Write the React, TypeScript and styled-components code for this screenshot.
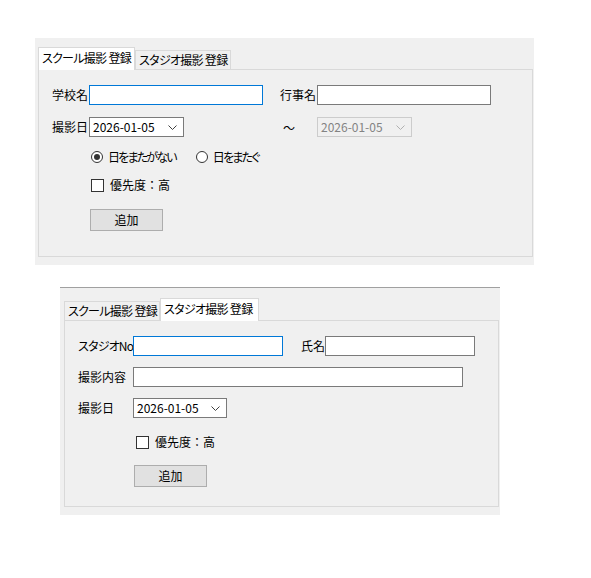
import React from "react";
import styled, { createGlobalStyle } from "styled-components";

const GlobalStyle = createGlobalStyle`
  html, body { margin: 0; padding: 0; background: #ffffff; }
  body {
    font-family: "Noto Sans CJK JP", "Noto Sans", sans-serif;
    font-size: 12px;
    color: #000000;
  }
`;

const Page = styled.div`
  display: flex;
  flex-direction: column;
  align-items: flex-start;
`;

const Window = styled.div<{ $mt: number; $ml: number; $w: number; $pt: number; $pl: number; $topLine?: boolean }>`
  margin-top: ${(p) => p.$mt}px;
  margin-left: ${(p) => p.$ml}px;
  width: ${(p) => p.$w}px;
  box-sizing: border-box;
  background: #f0f0f0;
  padding: ${(p) => p.$pt}px 1px 8px ${(p) => p.$pl}px;
  border-top: ${(p) => (p.$topLine ? "1px solid #a0a0a0" : "none")};
`;

const TabBar = styled.div`
  display: flex;
  align-items: flex-end;
  height: 22px;
`;

const Tab = styled.div<{ $active?: boolean; $w: number }>`
  box-sizing: border-box;
  width: ${(p) => p.$w}px;
  height: ${(p) => (p.$active ? 23 : 19)}px;
  margin-bottom: ${(p) => (p.$active ? -1 : 0)}px;
  position: relative;
  z-index: ${(p) => (p.$active ? 1 : 0)};
  background: ${(p) => (p.$active ? "#ffffff" : "#f0f0f0")};
  border: 1px solid #d9d9d9;
  border-bottom: none;
  display: flex;
  align-items: center;
  padding: ${(p) => (p.$active ? "0 0 2px 3px" : "0 0 0 3px")};
  white-space: nowrap;
  line-height: 1;
  font-feature-settings: "palt";
  letter-spacing: -0.7px;
  overflow: hidden;
`;

const Panel = styled.div<{ $h: number; $pl: number }>`
  box-sizing: border-box;
  height: ${(p) => p.$h}px;
  border: 1px solid #d9d9d9;
  padding: 15px 0 0 ${(p) => p.$pl}px;
  display: flex;
  flex-direction: column;
`;

const Row = styled.div<{ $mt?: number; $indent?: number }>`
  display: flex;
  align-items: center;
  margin-top: ${(p) => p.$mt ?? 0}px;
  margin-left: ${(p) => p.$indent ?? 0}px;
`;

const Label = styled.span<{ $w: number; $ml?: number; $kana?: boolean }>`
  width: ${(p) => p.$w}px;
  margin-left: ${(p) => p.$ml ?? 0}px;
  flex: none;
  white-space: nowrap;
  line-height: 20px;
  font-feature-settings: ${(p) => (p.$kana ? '"palt"' : "normal")};
  letter-spacing: ${(p) => (p.$kana ? "-0.8px" : "0")};
`;

const TextBox = styled.div<{ $w: number; $focused?: boolean }>`
  box-sizing: border-box;
  width: ${(p) => p.$w}px;
  height: 20px;
  background: #ffffff;
  border: 1px solid ${(p) => (p.$focused ? "#0078d7" : "#7a7a7a")};
  flex: none;
`;

const Select = styled.div<{ $w: number; $disabled?: boolean }>`
  box-sizing: border-box;
  width: ${(p) => p.$w}px;
  height: 20px;
  background: ${(p) => (p.$disabled ? "#f0f0f0" : "#ffffff")};
  border: 1px solid ${(p) => (p.$disabled ? "#cccccc" : "#7a7a7a")};
  color: ${(p) => (p.$disabled ? "#838383" : "#000000")};
  display: flex;
  align-items: center;
  justify-content: space-between;
  padding: 0 6px 0 3px;
  flex: none;
  line-height: 1;
`;

const Chevron = styled.svg<{ $disabled?: boolean }>`
  width: 9px;
  height: 5px;
  stroke: ${(p) => (p.$disabled ? "#b0b0b0" : "#404040")};
  fill: none;
`;

const Tilde = styled.span<{ $ml: number; $w: number }>`
  margin-left: ${(p) => p.$ml}px;
  width: ${(p) => p.$w}px;
  flex: none;
`;

const Option = styled.label<{ $mr?: number; $gap: number }>`
  display: flex;
  align-items: center;
  gap: ${(p) => p.$gap}px;
  margin-right: ${(p) => p.$mr ?? 0}px;
  line-height: 14px;
  white-space: nowrap;
`;

const OptionText = styled.span<{ $kana?: boolean }>`
  font-feature-settings: ${(p) => (p.$kana ? '"palt"' : "normal")};
  letter-spacing: ${(p) => (p.$kana ? "-1.8px" : "0")};
`;

const RadioCircle = styled.span<{ $checked?: boolean }>`
  box-sizing: border-box;
  width: 12px;
  height: 12px;
  border-radius: 50%;
  border: 1px solid #333333;
  background: #ffffff;
  display: flex;
  align-items: center;
  justify-content: center;
  &::after {
    content: "";
    width: 6px;
    height: 6px;
    border-radius: 50%;
    background: ${(p) => (p.$checked ? "#333333" : "transparent")};
  }
`;

const CheckBox = styled.span`
  box-sizing: border-box;
  width: 13px;
  height: 13px;
  border: 1px solid #333333;
  background: #ffffff;
`;

const Button = styled.div<{ $mt: number; $indent: number }>`
  box-sizing: border-box;
  width: 73px;
  height: 22px;
  margin-top: ${(p) => p.$mt}px;
  margin-left: ${(p) => p.$indent}px;
  background: #e1e1e1;
  border: 1px solid #adadad;
  display: flex;
  align-items: center;
  justify-content: center;
  line-height: 1;
`;

const ChevronIcon = ({ disabled }: { disabled?: boolean }) => (
  <Chevron $disabled={disabled} viewBox="0 0 9 5">
    <polyline points="0.5,0.5 4.5,4.5 8.5,0.5" strokeWidth="1" />
  </Chevron>
);

export default function App() {
  return (
    <>
      <GlobalStyle />
      <Page>
        <Window $mt={38} $ml={35} $w={499} $pt={9} $pl={3}>
          <TabBar>
            <Tab $active $w={97}>スクール撮影 登録</Tab>
            <Tab $w={96}>スタジオ撮影 登録</Tab>
          </TabBar>
          <Panel $h={188} $pl={13}>
            <Row>
              <Label $w={37}>学校名</Label>
              <TextBox $w={174} $focused />
              <Label $w={37} $ml={17}>行事名</Label>
              <TextBox $w={174} />
            </Row>
            <Row $mt={12}>
              <Label $w={37}>撮影日</Label>
              <Select $w={95}>
                <span>2026-01-05</span>
                <ChevronIcon />
              </Select>
              <Tilde $ml={99} $w={34}>～</Tilde>
              <Select $w={95} $disabled>
                <span>2026-01-05</span>
                <ChevronIcon disabled />
              </Select>
            </Row>
            <Row $mt={13} $indent={39}>
              <Option $mr={20} $gap={5}>
                <RadioCircle $checked />
                <OptionText $kana>日をまたがない</OptionText>
              </Option>
              <Option $gap={5}>
                <RadioCircle />
                <OptionText $kana>日をまたぐ</OptionText>
              </Option>
            </Row>
            <Row $mt={14} $indent={39}>
              <Option $gap={6}>
                <CheckBox />
                <OptionText>優先度：高</OptionText>
              </Option>
            </Row>
            <Button $mt={17} $indent={38}>追加</Button>
          </Panel>
        </Window>

        <Window $mt={22} $ml={60} $w={440} $pt={10} $pl={4} $topLine>
          <TabBar>
            <Tab $w={96}>スクール撮影 登録</Tab>
            <Tab $active $w={99}>スタジオ撮影 登録</Tab>
          </TabBar>
          <Panel $h={187} $pl={13}>
            <Row>
              <Label $w={55} $kana>スタジオNo</Label>
              <TextBox $w={150} $focused />
              <Label $w={24} $ml={18}>氏名</Label>
              <TextBox $w={150} />
            </Row>
            <Row $mt={11}>
              <Label $w={55}>撮影内容</Label>
              <TextBox $w={330} />
            </Row>
            <Row $mt={11}>
              <Label $w={55}>撮影日</Label>
              <Select $w={94}>
                <span>2026-01-05</span>
                <ChevronIcon />
              </Select>
            </Row>
            <Row $mt={17} $indent={58}>
              <Option $gap={6}>
                <CheckBox />
                <OptionText>優先度：高</OptionText>
              </Option>
            </Row>
            <Button $mt={16} $indent={56}>追加</Button>
          </Panel>
        </Window>
      </Page>
    </>
  );
}
